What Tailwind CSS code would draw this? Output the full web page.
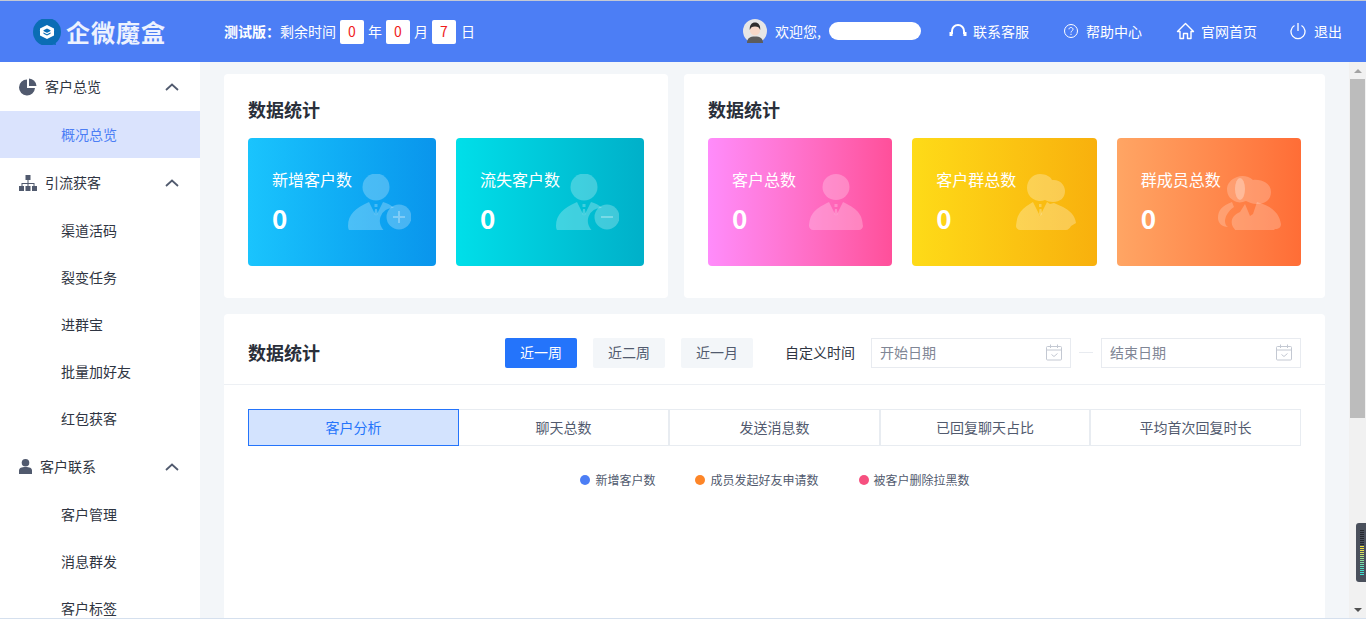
<!DOCTYPE html>
<html lang="zh-CN">
<head>
<meta charset="utf-8">
<title>企微魔盒</title>
<script src="https://cdn.jsdelivr.net/npm/@tailwindcss/browser@4"></script>
</head>
<body class="overflow-hidden bg-white font-['Noto_Sans_CJK_SC','Liberation_Sans',sans-serif]">
<div class="relative flex h-[619px] w-[1366px] flex-col overflow-hidden border-t border-t-[#c4c9d4] border-b border-b-[#d5e0ee]">

  <!-- Header -->
  <header class="flex h-[61px] shrink-0 items-center bg-[#4c7ef5] text-sm text-white">
    <div class="flex w-[224px] items-center pl-[32px]">
      <svg class="h-[26px] w-[30px]" viewBox="0 0 30 26">
        <circle cx="15" cy="13" r="14" fill="#0b6db5"/>
        <path d="M18 25l6 1-1-5z" fill="#0b6db5"/>
        <path d="M15 6l7 3.500v7L15 20l-7-3.500v-7z" fill="#fff"/>
        <path d="M15 9.500l3.500 1.800v3.400L15 16.500l-3.500-1.800v-3.400z" fill="#0b6db5"/>
        <path d="M8 11l7 3.500 7-3.500" fill="none" stroke="#fff" stroke-width="1.200"/>
      </svg>
      <span class="ml-[4px] text-[24px] leading-none font-bold tracking-[1px] whitespace-nowrap text-white/90">企微魔盒</span>
    </div>

    <div class="flex items-center">
      <span class="pb-[2px] font-bold">测试版&#xFF1A;</span>
      <span class="pb-[2px]">剩余时间</span>
      <span class="ml-[4px] flex h-[24px] w-[24px] items-center justify-center rounded-[2px] bg-white pb-[2px] text-[#f01c1c]">0</span>
      <span class="mx-[4px] pb-[2px]">年</span>
      <span class="flex h-[24px] w-[24px] items-center justify-center rounded-[2px] bg-white pb-[2px] text-[#f01c1c]">0</span>
      <span class="mx-[4px] pb-[2px]">月</span>
      <span class="flex h-[24px] w-[24px] items-center justify-center rounded-[2px] bg-white pb-[2px] text-[#f01c1c]">7</span>
      <span class="ml-[5px] pb-[2px]">日</span>
    </div>

    <div class="ml-auto flex -translate-y-px items-center pr-[24px]">
      <svg class="h-[24px] w-[24px]" viewBox="0 0 24 24">
        <circle cx="12" cy="12" r="12" fill="#e6e6e6"/>
        <path d="M4 24c0-5 3-6.500 8-6.500s8 1.500 8 6.500z" fill="#5c5c5c"/>
        <circle cx="12" cy="11.500" r="5" fill="#f7d9c9"/>
        <path d="M6.800 11c-.5-5 2-7.500 5.200-7.500s5.700 2.500 5.200 7.500c-1-2.500-2-3.500-5.200-3.500S7.800 8.500 6.800 11z" fill="#2e2e2e"/>
      </svg>
      <span class="ml-[8px]">欢迎您,</span>
      <span class="ml-[8px] h-[18px] w-[92px] rounded-full bg-white"></span>
      <svg class="ml-[28px] h-[16px] w-[18px]" viewBox="0 0 18 16" fill="none" stroke="#fff" stroke-width="2">
        <path d="M3 11V8a6 6 0 0 1 12 0v3"/>
        <path d="M2 9v4M16 9v4" stroke-width="3"/>
      </svg>
      <span class="ml-[6px]">联系客服</span>
      <svg class="ml-[34px] h-[16px] w-[16px]" viewBox="0 0 16 16" fill="none" stroke="#fff">
        <circle cx="8" cy="8" r="6.500"/>
        <path d="M6 6.300C6 5 7 4.500 8 4.500s2 .7 2 1.800c0 1.500-2 1.500-2 3.200"/>
        <path d="M8 10.800v1.200"/>
      </svg>
      <span class="ml-[7px]">帮助中心</span>
      <svg class="ml-[34px] h-[18px] w-[19px]" viewBox="0 0 19 18" fill="none" stroke="#fff" stroke-width="1.400">
        <path d="M1.500 9.500L9.500 1.500l8 8h-2.500v7h-3.500v-5h-4v5H4v-7z" stroke-linejoin="round"/>
      </svg>
      <span class="ml-[6px]">官网首页</span>
      <svg class="ml-[33px] h-[18px] w-[16px]" viewBox="0 0 16 18" fill="none" stroke="#fff" stroke-width="1.300">
        <path d="M4.500 3.500a7 7 0 1 0 7 0"/>
        <path d="M8 1v8"/>
      </svg>
      <span class="ml-[8px]">退出</span>
    </div>
  </header>

  <div class="flex min-h-0 flex-1">
    <!-- Sidebar -->
    <aside class="w-[200px] shrink-0 overflow-hidden bg-white text-[14px] text-[#2f3542]">
      <div class="flex h-[49px] items-center pl-[19px] pr-[21px]">
        <svg class="h-[18px] w-[18px]" viewBox="0 0 18 18" fill="#515a6e">
          <path d="M8 1.500a8 8 0 1 0 8 8.500H8z"/>
          <path d="M10 .5v7.500h7.500A8 8 0 0 0 10 .5z"/>
        </svg>
        <span class="ml-[8px]">客户总览</span>
        <svg class="ml-auto h-[8px] w-[14px]" viewBox="0 0 14 8" fill="none" stroke="#515a6e" stroke-width="1.800"><path d="M1 7l6-5.500L13 7"/></svg>
      </div>
      <div class="flex h-[47px] items-center bg-[#dae3fd] pl-[61px] text-[#4c7ef5]">概况总览</div>

      <div class="flex h-[49px] items-center pl-[19px] pr-[21px]">
        <svg class="h-[16px] w-[18px]" viewBox="0 0 18 16" fill="#515a6e">
          <rect x="6.500" y="0" width="5" height="5"/>
          <rect x="0" y="11" width="5" height="5"/>
          <rect x="6.500" y="11" width="5" height="5"/>
          <rect x="13" y="11" width="5" height="5"/>
          <path d="M8.500 5h1v3h6v3h-1V9H9.500v2h-1V9H3.500v2h-1V8h6z"/>
        </svg>
        <span class="ml-[8px]">引流获客</span>
        <svg class="ml-auto h-[8px] w-[14px]" viewBox="0 0 14 8" fill="none" stroke="#515a6e" stroke-width="1.800"><path d="M1 7l6-5.500L13 7"/></svg>
      </div>
      <div class="flex h-[47px] items-center pl-[61px]">渠道活码</div>
      <div class="flex h-[47px] items-center pl-[61px]">裂变任务</div>
      <div class="flex h-[47px] items-center pl-[61px]">进群宝</div>
      <div class="flex h-[47px] items-center pl-[61px]">批量加好友</div>
      <div class="flex h-[47px] items-center pl-[61px]">红包获客</div>

      <div class="flex h-[49px] items-center pl-[19px] pr-[21px]">
        <svg class="h-[15px] w-[13px]" viewBox="0 0 13 15" fill="#515a6e">
          <circle cx="6.500" cy="3.800" r="3.800"/>
          <path d="M0 15v-3.500C0 9 2.500 8 6.500 8s6.500 1 6.500 3.500V15z"/>
        </svg>
        <span class="ml-[8px]">客户联系</span>
        <svg class="ml-auto h-[8px] w-[14px]" viewBox="0 0 14 8" fill="none" stroke="#515a6e" stroke-width="1.800"><path d="M1 7l6-5.500L13 7"/></svg>
      </div>
      <div class="flex h-[47px] items-center pl-[61px]">客户管理</div>
      <div class="flex h-[47px] items-center pl-[61px]">消息群发</div>
      <div class="flex h-[47px] items-center pl-[61px]">客户标签</div>
    </aside>

    <!-- Main -->
    <main class="flex min-w-0 flex-1 flex-col gap-[16px] overflow-hidden bg-[#f3f6f9] pt-[12px] pl-[24px] pr-[24px]">
      <div class="flex shrink-0 gap-[16px]">
        <section class="h-[224px] w-[444px] shrink-0 rounded-[4px] bg-white px-[24px]">
          <h2 class="flex h-[64px] items-center pt-[6px] text-[18px] font-bold text-[#2a2f3a]">数据统计</h2>
          <div class="flex gap-[20px]">
            <div class="relative h-[128px] flex-1 rounded-[4px] bg-gradient-to-r from-[#1ac4fd] to-[#0a95ec] pl-[24px] text-white">
              <p class="pt-[29px] text-[16px] leading-[24px]">新增客户数</p>
              <p class="pt-[9px] text-[26px] leading-[36px] font-bold">0</p>
              <svg class="absolute top-[36px] left-[100px] h-[56px] w-[63px]" viewBox="0 0 63 56" fill="#fff" fill-opacity=".25">
                <circle cx="28" cy="13" r="13.500"/>
                <path fill-rule="evenodd" d="M0 52c0-12 8-18 21-24l7 14 7-14c4 1 8 3 11 6a13 13 0 0 0-8 24H4c-2 0-4-2-4-6z"/>
                <path d="M26.500 30h3v3h-3zM27 35h2l.7 5-1.700 2-1.700-2z"/>
                <circle cx="51" cy="43" r="12.500"/>
                <path d="M45 43h12M51 37v12" stroke="#fff" stroke-opacity=".3" stroke-width="2"/>
              </svg>
            </div>
            <div class="relative h-[128px] flex-1 rounded-[4px] bg-gradient-to-r from-[#00dfe9] to-[#00b0c9] pl-[24px] text-white">
              <p class="pt-[29px] text-[16px] leading-[24px]">流失客户数</p>
              <p class="pt-[9px] text-[26px] leading-[36px] font-bold">0</p>
              <svg class="absolute top-[36px] left-[100px] h-[56px] w-[63px]" viewBox="0 0 63 56" fill="#fff" fill-opacity=".25">
                <circle cx="28" cy="13" r="13.500"/>
                <path fill-rule="evenodd" d="M0 52c0-12 8-18 21-24l7 14 7-14c4 1 8 3 11 6a13 13 0 0 0-8 24H4c-2 0-4-2-4-6z"/>
                <path d="M26.500 30h3v3h-3zM27 35h2l.7 5-1.700 2-1.700-2z"/>
                <circle cx="51" cy="43" r="12.500"/>
                <path d="M45 43h12" stroke="#fff" stroke-opacity=".3" stroke-width="2"/>
              </svg>
            </div>
          </div>
        </section>

        <section class="h-[224px] min-w-0 flex-1 rounded-[4px] bg-white px-[24px]">
          <h2 class="flex h-[64px] items-center pt-[6px] text-[18px] font-bold text-[#2a2f3a]">数据统计</h2>
          <div class="flex gap-[20px]">
            <div class="relative h-[128px] flex-1 rounded-[4px] bg-gradient-to-r from-[#ff8cfb] to-[#ff4f9a] pl-[24px] text-white">
              <p class="pt-[29px] text-[16px] leading-[24px]">客户总数</p>
              <p class="pt-[9px] text-[26px] leading-[36px] font-bold">0</p>
              <svg class="absolute top-[36px] left-[100px] h-[56px] w-[56px]" viewBox="0 0 56 56" fill="#fff" fill-opacity=".25">
                <ellipse cx="28" cy="13" rx="13.500" ry="13"/>
                <path d="M1 52c1-10 3-16 20-24l7 14 7-14c17 8 19 14 20 24 0 2-2 4-4 4H5c-2 0-4-2-4-4z"/>
                <path d="M26.500 30h3v3h-3zM27 35h2l.7 5-1.700 2-1.700-2z"/>
              </svg>
            </div>
            <div class="relative h-[128px] flex-1 rounded-[4px] bg-gradient-to-r from-[#fedb18] to-[#f8b00d] pl-[24px] text-white">
              <p class="pt-[29px] text-[16px] leading-[24px]">客户群总数</p>
              <p class="pt-[9px] text-[26px] leading-[36px] font-bold">0</p>
              <svg class="absolute top-[36px] left-[103px] h-[56px] w-[62px]" viewBox="0 0 62 56" fill="#fff" fill-opacity=".28">
                <path d="M25 0c6 0 11 3 12 6 8-1 13 5 13 11 0 7-5 11-12 11-3 0-6-1-8-2a13 13 0 0 1-18-12C12 6 18 0 25 0z"/>
                <path d="M1 52c1-10 3-16 17-24l7 14 7-14 3 2 4-1 9 4c7 4 12 8 13 16l-5 3c-1 2-3 4-5 4H5c-2 0-4-2-4-4z"/>
                <path d="M24 30h2.500v3H24zM24.500 35h2l.5 5-1.500 2-1.500-2z"/>
              </svg>
            </div>
            <div class="relative h-[128px] flex-1 rounded-[4px] bg-gradient-to-r from-[#ffa564] to-[#ff6d36] pl-[24px] text-white">
              <p class="pt-[29px] text-[16px] leading-[24px]">群成员总数</p>
              <p class="pt-[9px] text-[26px] leading-[36px] font-bold">0</p>
              <svg class="absolute top-[38px] left-[100px] h-[54px] w-[65px]" viewBox="0 0 65 54" fill="#fff" fill-opacity=".22">
                <path d="M20 1c5-2 12-1 16 3 8-1 18 3 18 12 0 8-6 12-14 12-5 0-8-2-11-3-3 1-6 2-9 1-6-2-10-6-10-13C10 8 14 3 20 1z"/>
                <ellipse cx="23" cy="13" rx="5" ry="11" fill-opacity=".3"/>
                <path d="M1 42c0-8 4-12 14-16l2 5c-6 4-9 10-9 14 0 3 1 5 3 6-6 0-10-4-10-9z"/>
                <path d="M16 51c-3-5-1-12 7-15l5-8 5 12 3-2 4-12c14 4 22 10 24 22 0 3-2 5-6 5l-2 2H19z"/>
              </svg>
            </div>
          </div>
        </section>
      </div>

      <section class="min-h-0 flex-1 rounded-t-[4px] bg-white">
        <div class="flex h-[71px] items-center border-b border-[#edf0f4] pt-[7px] pr-[24px] pl-[24px] text-[14px]">
          <h2 class="text-[18px] font-bold text-[#2a2f3a]">数据统计</h2>
          <div class="ml-auto flex items-center">
            <button class="h-[30px] w-[72px] rounded-[2px] bg-[#2474fb] text-white">近一周</button>
            <button class="ml-[16px] h-[30px] w-[72px] rounded-[2px] bg-[#f3f6f9] text-[#515a6e]">近二周</button>
            <button class="ml-[16px] h-[30px] w-[72px] rounded-[2px] bg-[#f3f6f9] text-[#515a6e]">近一月</button>
            <span class="ml-[32px] text-[#2f3542]">自定义时间</span>
            <div class="ml-[16px] flex h-[30px] w-[200px] items-center justify-between border border-[#e8ebf0] pr-[7px] pl-[8px] text-[#808695]">
              <span>开始日期</span>
              <svg class="h-[17px] w-[17px]" viewBox="0 0 17 17" fill="none" stroke="#c3c8d2">
                <rect x=".5" y="2.500" width="15" height="13.500" rx="1"/>
                <path d="M.5 6h15M4.500 .5v3.500M11.500 .5v3.500M5.500 10.500l2.500 2 3.500-3"/>
              </svg>
            </div>
            <span class="mx-[8px] h-px w-[14px] bg-[#e8ebf0]"></span>
            <div class="flex h-[30px] w-[200px] items-center justify-between border border-[#e8ebf0] pr-[7px] pl-[8px] text-[#808695]">
              <span>结束日期</span>
              <svg class="h-[17px] w-[17px]" viewBox="0 0 17 17" fill="none" stroke="#c3c8d2">
                <rect x=".5" y="2.500" width="15" height="13.500" rx="1"/>
                <path d="M.5 6h15M4.500 .5v3.500M11.500 .5v3.500M5.500 10.500l2.500 2 3.500-3"/>
              </svg>
            </div>
          </div>
        </div>

        <div class="px-[24px] pt-[24px]">
          <div class="flex h-[37px] text-[14px] text-[#515a6e]">
            <div class="flex w-[211px] items-center justify-center border border-[#2474fb] bg-[#d3e3fe] text-[#2474fb]">客户分析</div>
            <div class="flex w-[211px] items-center justify-center border-y border-r-2 border-[#e8ecf1]">聊天总数</div>
            <div class="flex w-[211px] items-center justify-center border-y border-r-2 border-[#e8ecf1]">发送消息数</div>
            <div class="flex w-[210px] items-center justify-center border-y border-r-2 border-[#e8ecf1]">已回复聊天占比</div>
            <div class="flex w-[210px] items-center justify-center border-y border-r border-[#e8ecf1]">平均首次回复时长</div>
          </div>
          <div class="mt-[24px] flex h-[20px] items-center justify-center pl-[1px] text-[12px] text-[#515a6e]">
            <span class="h-[10px] w-[10px] rounded-full bg-[#4c7ef5]"></span>
            <span class="ml-[5px]">新增客户数</span>
            <span class="ml-[40px] h-[10px] w-[10px] rounded-full bg-[#fd8528]"></span>
            <span class="ml-[5px]">成员发起好友申请数</span>
            <span class="ml-[40px] h-[10px] w-[10px] rounded-full bg-[#f6507f]"></span>
            <span class="ml-[5px]">被客户删除拉黑数</span>
          </div>
        </div>
      </section>
    </main>

    <!-- Scrollbar -->
    <div class="flex w-[17px] shrink-0 flex-col items-center bg-[#f1f1f1]">
      <div class="flex h-[17px] items-center justify-center">
        <span class="border-x-[4px] border-b-[4px] border-x-transparent border-b-[#a3a3a3]"></span>
      </div>
      <div class="h-[339px] w-[15px] bg-[#bcbcbc]"></div>
      <div class="mt-auto flex h-[17px] items-center justify-center">
        <span class="border-x-[4px] border-t-[4px] border-x-transparent border-t-[#505050]"></span>
      </div>
    </div>
  </div>

  <!-- Audio meter overlay at the screen edge -->
  <div class="absolute top-[522px] left-[1356px] flex h-[59px] w-[12px] flex-col gap-[1px] rounded-l-[3px] bg-[#4a505c] py-[7px] pl-[4px]">
    <span class="h-px w-[4px] shrink-0 bg-[#23262c]"></span>
    <span class="h-px w-[4px] shrink-0 bg-[#23262c]"></span>
    <span class="h-px w-[4px] shrink-0 bg-[#23262c]"></span>
    <span class="h-px w-[4px] shrink-0 bg-[#23262c]"></span>
    <span class="h-px w-[4px] shrink-0 bg-[#23262c]"></span>
    <span class="h-px w-[4px] shrink-0 bg-[#23262c]"></span>
    <span class="h-px w-[4px] shrink-0 bg-[#23262c]"></span>
    <span class="h-px w-[4px] shrink-0 bg-[#23262c]"></span>
    <span class="h-px w-[4px] shrink-0 bg-[#f0e040]"></span>
    <span class="h-px w-[4px] shrink-0 bg-[#f0e040]"></span>
    <span class="h-px w-[4px] shrink-0 bg-[#e8e050]"></span>
    <span class="h-px w-[4px] shrink-0 bg-[#d8e060]"></span>
    <span class="h-px w-[4px] shrink-0 bg-[#c8e070]"></span>
    <span class="h-px w-[4px] shrink-0 bg-[#b0e080]"></span>
    <span class="h-px w-[4px] shrink-0 bg-[#a0e090]"></span>
    <span class="h-px w-[4px] shrink-0 bg-[#90e0a0]"></span>
    <span class="h-px w-[4px] shrink-0 bg-[#80e0a8]"></span>
    <span class="h-px w-[4px] shrink-0 bg-[#70e0b0]"></span>
    <span class="h-px w-[4px] shrink-0 bg-[#60e0b8]"></span>
    <span class="h-px w-[4px] shrink-0 bg-[#50e0c0]"></span>
    <span class="h-px w-[4px] shrink-0 bg-[#48e0c8]"></span>
    <span class="h-px w-[4px] shrink-0 bg-[#40e0d0]"></span>
    <span class="h-px w-[4px] shrink-0 bg-[#40e0d0]"></span>
  </div>
</div>
</body>
</html>
